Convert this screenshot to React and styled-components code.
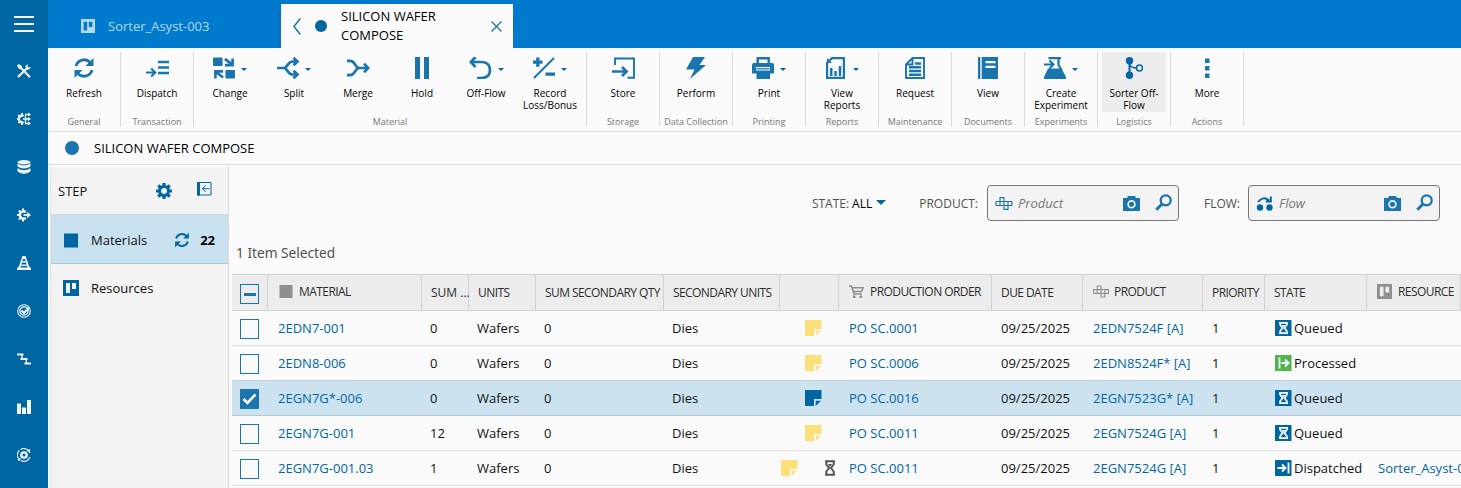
import React from "react";
import styled, { createGlobalStyle, css } from "styled-components";

const GlobalStyle = createGlobalStyle`
  * { box-sizing: border-box; }
  html, body { margin: 0; padding: 0; overflow: hidden; }
  body { font-family: "Open Sans", "Noto Sans", sans-serif; font-size: 13px; color: #000; background: #fafafa; }
  svg { display: block; flex: none; }
`;

const DEEP = "#0066a1";
const BLUE = "#1a74ad";

/* ---------- page shell ---------- */

const Shell = styled.div`
  display: flex;
  width: 1461px;
  height: 488px;
  overflow: hidden;
  background: #fafafa;
`;

const Rail = styled.nav`
  width: 48px;
  flex: none;
  background: ${DEEP};
  display: flex;
  flex-direction: column;
`;

const RailButton = styled.div`
  height: 48px;
  flex: none;
  display: flex;
  align-items: center;
  justify-content: center;
  color: #f2f7fa;
  padding-bottom: ${(p) => (p.$menu ? 0 : 2)}px;
`;

const Main = styled.div`
  flex: 1;
  min-width: 0;
  display: flex;
  flex-direction: column;
`;

/* ---------- tabs ---------- */

const TabBar = styled.header`
  height: 48px;
  flex: none;
  display: flex;
  align-items: flex-end;
  background: #007acc;
`;

const IdleTab = styled.div`
  width: 233px;
  height: 38px;
  padding: 0 0 6px 33px;
  display: flex;
  align-items: center;
  gap: 13px;
  color: #b5d8f0;
  font-size: 13px;
  border-right: 2px solid #0a72bc;
`;

const ActiveTab = styled.div`
  width: 232px;
  height: 44px;
  padding: 0 11px 0 12px;
  display: flex;
  align-items: center;
  background: #fafafa;
`;

const TabTitle = styled.div`
  flex: 1;
  padding-right: 40px;
  margin-left: 14px;
  font-size: 13px;
  line-height: 19px;
`;

const Dot = styled.span`
  width: ${(p) => p.$size}px;
  height: ${(p) => p.$size}px;
  border-radius: 50%;
  background: ${(p) => p.$color};
  flex: none;
`;

const Spacer = styled.span`
  width: ${(p) => p.$w}px;
  flex: none;
`;

/* ---------- ribbon ---------- */

const Ribbon = styled.div`
  height: 84px;
  flex: none;
  display: flex;
  padding-top: 4px;
  border-bottom: 1px solid #dcdcdc;
`;

const Group = styled.section`
  height: 75px;
  padding: 0 4px;
  border-right: 1px solid #dcdcdc;
  display: flex;
  flex-direction: column;
`;

const GroupItems = styled.div`
  display: flex;
`;

const GroupName = styled.div`
  height: 15px;
  margin: 1px -4px 0;
  font-size: 9px;
  line-height: 17px;
  text-align: center;
  white-space: nowrap;
  color: #777;
`;

const Tool = styled.div`
  width: 64px;
  height: 60px;
  padding-top: 5px;
  display: flex;
  flex-direction: column;
  align-items: center;
  background: ${(p) => (p.$active ? "#ececec" : "transparent")};
`;

const ToolIcon = styled.div`
  height: 22px;
  display: flex;
  align-items: center;
  gap: 6px;
  color: ${BLUE};
`;

const ToolLabel = styled.div`
  margin-top: 8px;
  font-size: 10px;
  line-height: 12px;
  text-align: center;
  white-space: pre;
`;

const Caret = styled.span`
  width: 0;
  height: 0;
  border: ${(p) => p.$size}px solid transparent;
  border-top-color: ${DEEP};
  border-bottom: 0;
  margin-top: ${(p) => p.$shift}px;
`;

/* ---------- title ---------- */

const TitleBar = styled.div`
  height: 33px;
  flex: none;
  display: flex;
  align-items: center;
  gap: 15px;
  padding-left: 17px;
  border-bottom: 1px solid #dcdcdc;
`;

const Body = styled.div`
  flex: 1;
  display: flex;
  min-height: 0;
  padding-left: 2px;
`;

/* ---------- step panel ---------- */

const Panel = styled.aside`
  width: 179px;
  flex: none;
  margin-top: 2px;
  background: #f3f3f3;
  border-left: 1px solid #e2e2e2;
  border-right: 1px solid #d6d6d6;
`;

const PanelHeader = styled.div`
  height: 48px;
  padding: 0 16px 0 7px;
  display: flex;
  align-items: center;
  border-bottom: 1px solid #d4d9dc;
  color: ${DEEP};
`;

const PanelTitle = styled.span`
  flex: 1;
  color: #111;
`;

const CollapseIcon = styled.span`
  margin: 0 0 4px 25px;
`;

const PanelRow = styled.div`
  height: ${(p) => (p.$selected ? 49 : 48)}px;
  padding: ${(p) => (p.$selected ? 2 : 0)}px 13px 0 12px;
  display: flex;
  align-items: center;
  color: ${DEEP};
  ${(p) => p.$selected && css`background: #c9e1ef; border-bottom: 1px solid #a9c8da;`}
`;

const RowIcon = styled.span`
  width: 28px;
  flex: none;
`;

const RowText = styled.span`
  flex: 1;
  color: #111;
`;

const Count = styled.b`
  margin-left: 10px;
  color: #000;
  font-weight: 700;
`;

/* ---------- filters ---------- */

const Content = styled.main`
  flex: 1;
  min-width: 0;
  padding-left: 3px;
`;

const Filters = styled.div`
  height: 74px;
  padding: 20px 21px 0 0;
  display: flex;
  align-items: flex-start;
  justify-content: flex-end;
`;

const FilterLabel = styled.div`
  height: 36px;
  display: flex;
  align-items: center;
  font-size: 12px;
  color: #505050;
  margin-right: ${(p) => p.$gap}px;
`;

const StateValue = styled.span`
  color: #000;
  margin: 0 4px 0 3px;
`;

const Lookup = styled.div`
  width: 192px;
  height: 36px;
  padding: 0 6px 0 7px;
  display: flex;
  align-items: center;
  color: ${BLUE};
  background: #f3f3f3;
  border: 1px solid #777;
  border-radius: 4px;
`;

const Placeholder = styled.span`
  flex: 1;
  margin-left: 5px;
  font-style: italic;
  font-size: 13px;
  color: #757575;
`;

const LookupAction = styled.span`
  margin: -2px 0 0 15px;
`;

const Selection = styled.div`
  height: 35px;
  padding: 4px 0 0 4px;
  font-family: "Noto Sans", "Open Sans", sans-serif;
  font-size: 13.7px;
  line-height: 20px;
  color: #505050;
`;

/* ---------- table ---------- */

const columns = "36px 154px 47px 67px 128px 116px 59px 153px 91px 120px 62px 102px 94px";

const HeadRow = styled.div`
  display: grid;
  grid-template-columns: ${columns};
  height: 37px;
  background: #ececec;
  border-top: 1px solid #d2d2d2;
  border-bottom: 1px solid #d2d2d2;
`;

const HeadCell = styled.div`
  padding-left: 9px;
  display: flex;
  align-items: center;
  gap: ${(p) => p.$gap || 6}px;
  border-right: 1px solid #d2d2d2;
  font-size: 12px;
  letter-spacing: -0.57px;
  white-space: nowrap;
  color: #2c2c2c;
  svg { color: #8e8e8e; }
  ${(p) => p.$icon && css`padding-bottom: 2px; padding-left: 10px;`}
  ${(p) => p.$loose && css`letter-spacing: 0;`}
`;

const Row = styled.div`
  display: grid;
  grid-template-columns: ${columns};
  height: 35px;
  background: ${(p) => (p.$selected ? "#cce3ef" : "#fafafa")};
  border-bottom: 1px solid ${(p) => (p.$selected ? "#b3c9d5" : "#dedede")};
  ${(p) => p.$selected && css`box-shadow: 0 -1px 0 #bcd0da;`}
`;

const Cell = styled.div`
  padding-left: ${(p) => p.$pad || 10}px;
  display: flex;
  align-items: center;
  white-space: nowrap;
  font-size: 13px;
  color: ${(p) => (p.$link ? DEEP : "#111")};
`;

const CheckCell = styled.div`
  padding: ${(p) => p.$top || 0}px 0 0 8px;
  display: flex;
  align-items: center;
  border-right: ${(p) => (p.$head ? "1px solid #d2d2d2" : "0")};
`;

const CheckBox = styled.span`
  width: 19px;
  height: 20px;
  border: 1px solid ${BLUE};
  background: ${(p) => (p.$on ? BLUE : "transparent")};
  display: flex;
  align-items: center;
  justify-content: center;
`;

const Dash = styled.span`
  width: 12px;
  height: 3px;
  margin-top: 1px;
  background: ${BLUE};
`;

const NoteCell = styled.div`
  padding-right: ${(p) => (p.$wait ? 3 : 17)}px;
  display: flex;
  align-items: center;
  justify-content: flex-end;
  gap: 26px;
  color: #555;
`;

const StateCell = styled(Cell)`
  gap: 2px;
`;

/* ---------- icons ---------- */

const Icon = ({ w = 22, h = w, vb, children }) => (
  <svg width={w} height={h} viewBox={vb || `0 0 ${w} ${h}`} fill="none" stroke="currentColor" strokeWidth="2">
    {children}
  </svg>
);
const solid = { fill: "currentColor", stroke: "none" };

const RefreshIcon = ({ size = 22 }) => (
  <Icon w={size} vb="0 0 22 22">
    <path d="M3 9A8.3 8.3 0 0 1 17 5.3M19 13A8.3 8.3 0 0 1 5 16.7" strokeWidth="2.8" />
    <path {...solid} d="M20.5 1v8h-8zM1.500 21v-8h8z" />
  </Icon>
);
const BoardIcon = ({ size = 16, hole = "#fff" }) => (
  <Icon w={size} vb="0 0 16 16">
    <path {...solid} d="M0 0h16v16H0z" />
    <path fill={hole} stroke="none" d="M3 3h4v10H3zM9 3h4v6H9z" />
  </Icon>
);
const ProductIcon = ({ w = 17 }) => (
  <Icon w={w} h={13} vb="0 0 17 13">
    <path strokeWidth="1.1" d="M4.500.6h4v7.900h-4zM.6 4.500h11.900v4H.6zM8.500 4.500h7.900v4H8.500zM8.500 4.500h4v7.900h-4z" />
  </Icon>
);
const CameraIcon = () => (
  <Icon w={17} h={15}>
    <path {...solid} d="M0 2h4L5 0h7l1 2h4v13H0z" />
    <circle cx="8.500" cy="8.200" r="3.400" strokeWidth="1.700" stroke="#f3f3f3" />
  </Icon>
);
const SearchIcon = () => (
  <Icon w={17} h={17}>
    <circle cx="10.700" cy="6.300" r="5" strokeWidth="2.300" />
    <path d="M7 10L1.300 15.800" strokeWidth="3" />
  </Icon>
);
const Hourglass = ({ w = 12, h = 16 }) => (
  <Icon w={w} h={h} vb="0 0 12 16">
    <path strokeWidth="2" d="M1 1.200h10M1 14.800h10M2.300 1.500v3L5 8l-2.700 3.500v3M9.700 1.500v3L7 8l2.700 3.500v3" />
    <path {...solid} d="M4 4h4L6 7z" />
  </Icon>
);
const NoteIcon = ({ on }) => (
  <svg width="17" height="16" viewBox="0 0 17 16">
    <path fill={on ? DEEP : "#fbe07a"} d="M0 0h16.500v9H9v7H0z" />
    <path fill={on ? DEEP : "#fbe07a"} d="M10.700 10.700h5.300L10.700 16z" />
  </svg>
);

const StateIcon = ({ kind }) => (
  <svg width="17" height="16" viewBox="0 0 17 16" fill="none" stroke="#fff">
    <path fill={kind === "Processed" ? "#4fb34f" : DEEP} stroke="none" d="M0 0h16.500v16H0z" />
    {kind === "Queued" && (
      <g>
        <path strokeWidth="1.700" d="M4 2.800h9M4 13.200h9M5.200 3v2L7.600 8l-2.400 3v2M11.800 3v2L9.400 8l2.400 3v2" />
        <path fill="#fff" stroke="none" d="M6.500 5h4L8.500 7.500z" />
      </g>
    )}
    {kind === "Processed" && <path strokeWidth="1.800" d="M4.500 2.500v11M6.500 8h7M10 4.500L13.500 8 10 11.500" />}
    {kind === "Dispatched" && <path strokeWidth="1.800" d="M13.500 2.500v11M2.500 8H10M7 4.500L10.500 8 7 11.500" />}
  </svg>
);

const toolIcons = {
  refresh: <RefreshIcon />,
  dispatch: (
    <Icon w={23} h={22}>
      <path strokeWidth="2.600" d="M12 5h11M12 10.500h11M12 16h11" />
      <path strokeWidth="2.200" d="M0 15.500h8M5.200 11.500l4 4-4 4" />
    </Icon>
  ),
  change: (
    <Icon w={22} h={22} vb="0 0 23 22">
      <path {...solid} d="M1 0h8q1 0 1 1v7q0 1-1 1H1Q0 9 0 8V1Q0 0 1 0zM14 13h8q1 0 1 1v7q0 1-1 1h-8q-1 0-1-1v-7q0-1 1-1z" />
      <path strokeWidth="2.800" d="M12.500 1.500l7 5.500M20.500 1v7h-8M10.500 21L3.500 15.500M2.500 22v-7.500h8" />
    </Icon>
  ),
  split: (
    <Icon w={22} h={22} vb="0 0 22 22">
      <path strokeWidth="2.700" d="M0 11h8M20 4.500h-4Q13 4.500 11.500 7L8 11l3.500 4q1.500 2.500 4.500 2.500h4M16.500 0.800l4 3.700-4 3.700M16.500 13.800l4 3.700-4 3.700" />
    </Icon>
  ),
  merge: (
    <Icon w={23} h={22}>
      <path strokeWidth="2.700" d="M0 3.800h3q3 0 5 3.500t4 3.700q-2 .2-4 3.700t-5 3.500H0M11 11h10M17 6.800l4.200 4.200-4.200 4.200" />
    </Icon>
  ),
  hold: (
    <Icon w={14} h={22}>
      <path {...solid} d="M0 0h5v22H0zM9 0h5v22H9z" />
    </Icon>
  ),
  offflow: (
    <Icon w={23} h={22}>
      <path strokeWidth="2.700" d="M1.500 5H13q8 .5 8 8t-8 8H8M6.500 0L1.800 5l4.700 5" />
    </Icon>
  ),
  record: (
    <Icon w={22} h={22} vb="0 0 23 22">
      <path strokeWidth="2" d="M1 21.500L22 .5" />
      <path strokeWidth="3.400" d="M0 4.800h10M5 0v9.800M13 17.500h10" />
    </Icon>
  ),
  store: (
    <Icon w={23} h={22}>
      <path strokeWidth="1.900" d="M3 8V1.500h19v19.200h-6.500" />
      <path strokeWidth="2.600" d="M0 14.500h14M10 10l4.600 4.500L10 19" />
    </Icon>
  ),
  perform: (
    <Icon w={20} h={22}>
      <path {...solid} d="M7 0h12l-5.500 8H20L4 22l4.500-9.500H0z" />
    </Icon>
  ),
  print: (
    <Icon w={22} h={22}>
      <path strokeWidth="2.400" d="M5.700 6.500V1.200h11v5.300" />
      <path {...solid} fillRule="evenodd" d="M2 6h18q2 0 2 2v8.500h-4V22H4.500v-5.500H0V8q0-2 2-2zM4 10v3.500h14V10z" />
      <path d="M4.500 11.800h13" strokeWidth="1.300" />
    </Icon>
  ),
  reports: (
    <Icon w={22} h={22} vb="-1 0 22 22">
      <path strokeWidth="2.200" d="M1.100 6L6 1.100h11.900v19.800H1.100z" />
      <path {...solid} d="M1 1v5h5zM4 11h2.500v8H4zM8.300 14h2.500v5H8.300zM12.700 9h2.500v10h-2.500z" />
    </Icon>
  ),
  request: (
    <Icon w={20} h={22}>
      <path strokeWidth="1.900" d="M1 7.500L7.500 1H19v20H1zM1.500 7.500h6V1.500" />
      <path strokeWidth="2.500" d="M4 10.300h12M4 14h12M4 17.700h12M10 6.500h6" />
    </Icon>
  ),
  view: (
    <Icon w={20} h={22}>
      <path {...solid} fillRule="evenodd" d="M0 0h2.300v22H0zM3.700 0H20v22H3.700zM7.500 4v2.300h10V4zM7.500 8.700V11h10V8.700z" />
    </Icon>
  ),
  experiment: (
    <Icon w={22} h={22}>
      <path {...solid} d="M4 11.500h13.500L22 20v2H0v-2z" />
      <path strokeWidth="2.200" d="M4.500 1.100H17M14.500 1.500V8l3 5" />
      <path strokeWidth="2.100" d="M0 7.500h9M5.500 3.500l4 4-4 4" />
    </Icon>
  ),
  sorter: (
    <Icon w={18} h={22} vb="-1 0 18 22">
      <circle fill={DEEP} stroke="none" cx="3.500" cy="3.800" r="3.700" />
      <circle fill={DEEP} stroke="none" cx="3.500" cy="18.200" r="3.700" />
      <path stroke={DEEP} strokeWidth="2" d="M3.500 3v16" />
      <path stroke={DEEP} strokeWidth="1.500" d="M3.500 7q1.500 4 7 4" />
      <circle stroke={DEEP} cx="13.500" cy="11" r="3" strokeWidth="1.600" />
    </Icon>
  ),
  more: (
    <Icon w={5} h={22}>
      <path {...solid} d="M0 1.500h4.500V6H0zM0 9h4.500v4.500H0zM0 16.500h4.500V21H0z" />
    </Icon>
  ),
};

const railIcons = [
  <Icon w={20} h={16}><path d="M0 1h20M0 8h20M0 15h20" stroke="#fff" /></Icon>,
  <Icon w={14}>
    <path strokeWidth="2" d="M3 3l10 10.200" />
    <path strokeWidth="2.200" d="M1 13L10 4.300" />
    <path {...solid} d="M0 1.500L1.500 0l3.500 2-.3 2.700L2 5zM9 5.500L8.500 2 11 0l-.5 2.500 1.200 1L14 3l-1.800 2.600z" />
  </Icon>,
  <Icon w={14}>
    <path d="M6.500 4a3.300 3.300 0 1 0 0 6" strokeWidth="2.300" />
    <path strokeWidth="1.800" d="M5 1v3M5 10v3M0 7h2M1.300 2.800l2 2M1.300 11.200l2-2" />
    <path strokeWidth="1.300" d="M6 7h7M8.500 2.500v9M8 2.500h4M8 11.500h4" />
    <path {...solid} d="M11 .5l3 2-3 2zM11 5l3 2-3 2zM11 9.500l3 2-3 2z" />
  </Icon>,
  <Icon w={14}>
    <ellipse {...solid} cx="7" cy="2.300" rx="6.500" ry="2.200" />
    <path {...solid} d="M.5 3.500Q7 7.500 13.500 3.500v3Q7 10.500.5 6.500zM.5 8.200q6.500 4 13 0v3.300q-6.500 4.500-13 0z" />
  </Icon>,
  <Icon w={14}>
    <path d="M8.500 4.200A3.500 3.500 0 1 0 8.500 9.800" strokeWidth="2.300" />
    <path strokeWidth="2" d="M6 .5v3M6 10.500v3M0 7h2.500M1.800 2.500l2 2M1.800 11.500l2-2M8.500 2.500L7.800 4M8.500 11.500L7.800 10" />
    <path strokeWidth="1.800" d="M6.500 7h5" />
    <path {...solid} d="M10 3.700L14 7l-4 3.300z" />
  </Icon>,
  <Icon w={14}>
    <path {...solid} fillRule="evenodd" d="M5.500 0h3l4 11.500H14V14H0v-2.500h1.500zM6 3l-.6 2h3.200L8 3zM5 6.500L4.300 8.500h5.400L9 6.500zM4 10l-.4 1.500h6.800L10 10z" />
  </Icon>,
  <Icon w={14}>
    <circle cx="7" cy="7" r="6.300" strokeWidth="1.100" />
    <circle cx="7" cy="7" r="4.100" strokeWidth="1.300" />
    <path d="M4.500 6.500L7 9l5-5.500" strokeWidth="2" />
  </Icon>,
  <Icon w={14}>
    <path strokeWidth="2.200" d="M0 2.500h6.500M3.500 7h7M7.500 11.500H14" />
    <path strokeWidth="1.300" d="M5 2.500V7M9.300 7v4.500" />
  </Icon>,
  <Icon w={14}><path {...solid} d="M0 3.500h4V14H0zM5 7.500h4V14H5zM10 0h4v14h-4z" /></Icon>,
  <Icon w={14}>
    <circle cx="7" cy="7" r="2.700" strokeWidth="2.300" />
    <path strokeWidth="1.100" d="M3.500 1.600A6.300 6.300 0 0 1 13 5M13 9A6.300 6.300 0 0 1 4 12.600M1.300 10A6.300 6.300 0 0 1 2.300 2.500" />
    <circle {...solid} cx="11.800" cy="2.600" r="1.400" />
    <circle {...solid} cx="2.200" cy="11.400" r="1.400" />
  </Icon>,
];

const CartIcon = () => (
  <Icon w={15} h={13}>
    <path strokeWidth="1.500" d="M0 1h2.500L5 9h8M3 2.800h11.200L12.500 6.500H4.500" />
    <path {...solid} d="M4 10.500h2.500V13H4zM10.500 10.500H13V13h-2.500z" />
  </Icon>
);

/* ---------- data ---------- */

const groups = [
  { name: "General", tools: [["refresh", "Refresh"]] },
  { name: "Transaction", tools: [["dispatch", "Dispatch"]] },
  {
    name: "Material",
    tools: [
      ["change", "Change", true],
      ["split", "Split", true],
      ["merge", "Merge"],
      ["hold", "Hold"],
      ["offflow", "Off-Flow", true],
      ["record", "Record\nLoss/Bonus", true],
    ],
  },
  { name: "Storage", tools: [["store", "Store"]] },
  { name: "Data Collection", tools: [["perform", "Perform"]] },
  { name: "Printing", tools: [["print", "Print", true]] },
  { name: "Reports", tools: [["reports", "View\nReports", true]] },
  { name: "Maintenance", tools: [["request", "Request"]] },
  { name: "Documents", tools: [["view", "View"]] },
  { name: "Experiments", tools: [["experiment", "Create\nExperiment", true]] },
  { name: "Logistics", tools: [["sorter", "Sorter Off-\nFlow"]], active: true },
  { name: "Actions", tools: [["more", "More"]] },
];

const rows = [
  { id: "2EDN7-001", qty: "0", po: "PO SC.0001", product: "2EDN7524F [A]", state: "Queued" },
  { id: "2EDN8-006", qty: "0", po: "PO SC.0006", product: "2EDN8524F* [A]", state: "Processed" },
  { id: "2EGN7G*-006", qty: "0", po: "PO SC.0016", product: "2EGN7523G* [A]", state: "Queued", selected: true },
  { id: "2EGN7G-001", qty: "12", po: "PO SC.0011", product: "2EGN7524G [A]", state: "Queued" },
  { id: "2EGN7G-001.03", qty: "1", po: "PO SC.0011", product: "2EGN7524G [A]", state: "Dispatched", wait: true, resource: "Sorter_Asyst-003" },
];

export default function App() {
  return (
    <Shell>
      <GlobalStyle />
      <Rail>
        {railIcons.map((icon, i) => (
          <RailButton key={i} $menu={i === 0}>{icon}</RailButton>
        ))}
      </Rail>
      <Main>
        <TabBar>
          <IdleTab>
            <BoardIcon size={14} hole="#007acc" />
            Sorter_Asyst-003
          </IdleTab>
          <ActiveTab>
            <Icon w={8} h={17}><path strokeWidth="1.500" stroke={BLUE} d="M7.300.5L1 8.500l6.300 8" /></Icon>
            <Spacer $w={14} />
            <Dot $size={12} $color={DEEP} />
            <TabTitle>SILICON WAFER COMPOSE</TabTitle>
            <Icon w={11}><path strokeWidth="1.300" stroke={BLUE} d="M.5.5l10 10M10.500.5l-10 10" /></Icon>
          </ActiveTab>
        </TabBar>

        <Ribbon>
          {groups.map((g) => (
            <Group key={g.name}>
              <GroupItems>
                {g.tools.map(([icon, label, menu]) => (
                  <Tool key={label} $active={g.active}>
                    <ToolIcon>
                      {toolIcons[icon]}
                      {menu && <Caret $size={3.5} $shift={2} />}
                    </ToolIcon>
                    <ToolLabel>{label}</ToolLabel>
                  </Tool>
                ))}
              </GroupItems>
              <GroupName>{g.name}</GroupName>
            </Group>
          ))}
        </Ribbon>

        <TitleBar>
          <Dot $size={14} $color={BLUE} />
          SILICON WAFER COMPOSE
        </TitleBar>

        <Body>
          <Panel>
            <PanelHeader>
              <PanelTitle>STEP</PanelTitle>
              <Icon w={16}>
                <circle cx="8" cy="8" r="4.500" strokeWidth="3" />
                <path strokeWidth="3.200" d="M8 0v3M8 13v3M0 8h3M13 8h3M2.300 2.300l2.200 2.200M11.500 11.500l2.200 2.200M2.300 13.700l2.200-2.200M11.500 4.500l2.200-2.200" />
              </Icon>
              <CollapseIcon>
                <Icon w={15} h={14}>
                  <path strokeWidth="1" d="M.5.5h13.500v12.500H.5zM5.500 6.700h7M8.500 3.500L5.300 6.700l3.200 3.200" />
                  <path {...solid} d="M0 0h3v13.500H0z" />
                </Icon>
              </CollapseIcon>
            </PanelHeader>
            <PanelRow $selected>
              <RowIcon>
                <Icon w={15}><path {...solid} d="M1 0.500h14v14H1z" /></Icon>
              </RowIcon>
              <RowText>Materials</RowText>
              <RefreshIcon size={16} />
              <Count>22</Count>
            </PanelRow>
            <PanelRow>
              <RowIcon><BoardIcon size={16} hole="#f3f3f3" /></RowIcon>
              <RowText>Resources</RowText>
            </PanelRow>
          </Panel>

          <Content>
            <Filters>
              <FilterLabel $gap={33}>
                STATE:<StateValue>ALL</StateValue>
                <Caret $size={5} $shift={-2} />
              </FilterLabel>
              <FilterLabel $gap={9}>PRODUCT:</FilterLabel>
              <Lookup>
                <ProductIcon w={18} />
                <Placeholder>Product</Placeholder>
                <CameraIcon />
                <LookupAction><SearchIcon /></LookupAction>
              </Lookup>
              <FilterLabel $gap={8}><Spacer $w={25} />FLOW:</FilterLabel>
              <Lookup>
                <Icon w={18} h={15}>
                  <g stroke={DEEP}>
                    <circle cx="4" cy="11.500" r="3.200" fill={DEEP} stroke="none" />
                    <circle cx="13.500" cy="11.500" r="3.200" fill={DEEP} stroke="none" />
                    <path d="M2 6q5-6.500 11-1.500M14.800.5v5h-5" />
                  </g>
                </Icon>
                <Placeholder>Flow</Placeholder>
                <CameraIcon />
                <LookupAction><SearchIcon /></LookupAction>
              </Lookup>
            </Filters>
            <Selection>1 Item Selected</Selection>

            <HeadRow>
              <CheckCell $head $top={3}><CheckBox><Dash /></CheckBox></CheckCell>
              <HeadCell $icon>
                <Icon w={15} h={13}><path {...solid} d="M1.500 0h13v13h-13z" /></Icon>MATERIAL
              </HeadCell>
              <HeadCell $loose>SUM ...</HeadCell>
              <HeadCell>UNITS</HeadCell>
              <HeadCell>SUM SECONDARY QTY</HeadCell>
              <HeadCell>SECONDARY UNITS</HeadCell>
              <HeadCell />
              <HeadCell $icon><CartIcon />PRODUCTION ORDER</HeadCell>
              <HeadCell>DUE DATE</HeadCell>
              <HeadCell $icon $gap={5}><ProductIcon w={16} />PRODUCT</HeadCell>
              <HeadCell>PRIORITY</HeadCell>
              <HeadCell>STATE</HeadCell>
              <HeadCell $icon><BoardIcon size={15} hole="#ececec" />RESOURCE</HeadCell>
            </HeadRow>
            {rows.map((r) => (
              <Row key={r.id} $selected={r.selected}>
                <CheckCell $top={2}>
                  <CheckBox $on={r.selected}>
                    {r.selected && (
                      <Icon w={15} h={12}><path stroke="#fff" strokeWidth="2.600" d="M1.500 6l4 4L13.500 1.500" /></Icon>
                    )}
                  </CheckBox>
                </CheckCell>
                <Cell $link>{r.id}</Cell>
                <Cell $pad={8}>{r.qty}</Cell>
                <Cell $pad={8}>Wafers</Cell>
                <Cell $pad={8}>{"0"}</Cell>
                <Cell $pad={8}>Dies</Cell>
                <NoteCell $wait={r.wait}>
                  <NoteIcon on={r.selected} />
                  {r.wait && <Hourglass />}
                </NoteCell>
                <Cell $link>{r.po}</Cell>
                <Cell $pad={9}>09/25/2025</Cell>
                <Cell $link>{r.product}</Cell>
                <Cell $pad={9}>1</Cell>
                <StateCell>
                  <StateIcon kind={r.state} />
                  {r.state}
                </StateCell>
                <Cell $link $pad={11}>{r.resource}</Cell>
              </Row>
            ))}
          </Content>
        </Body>
      </Main>
    </Shell>
  );
}
